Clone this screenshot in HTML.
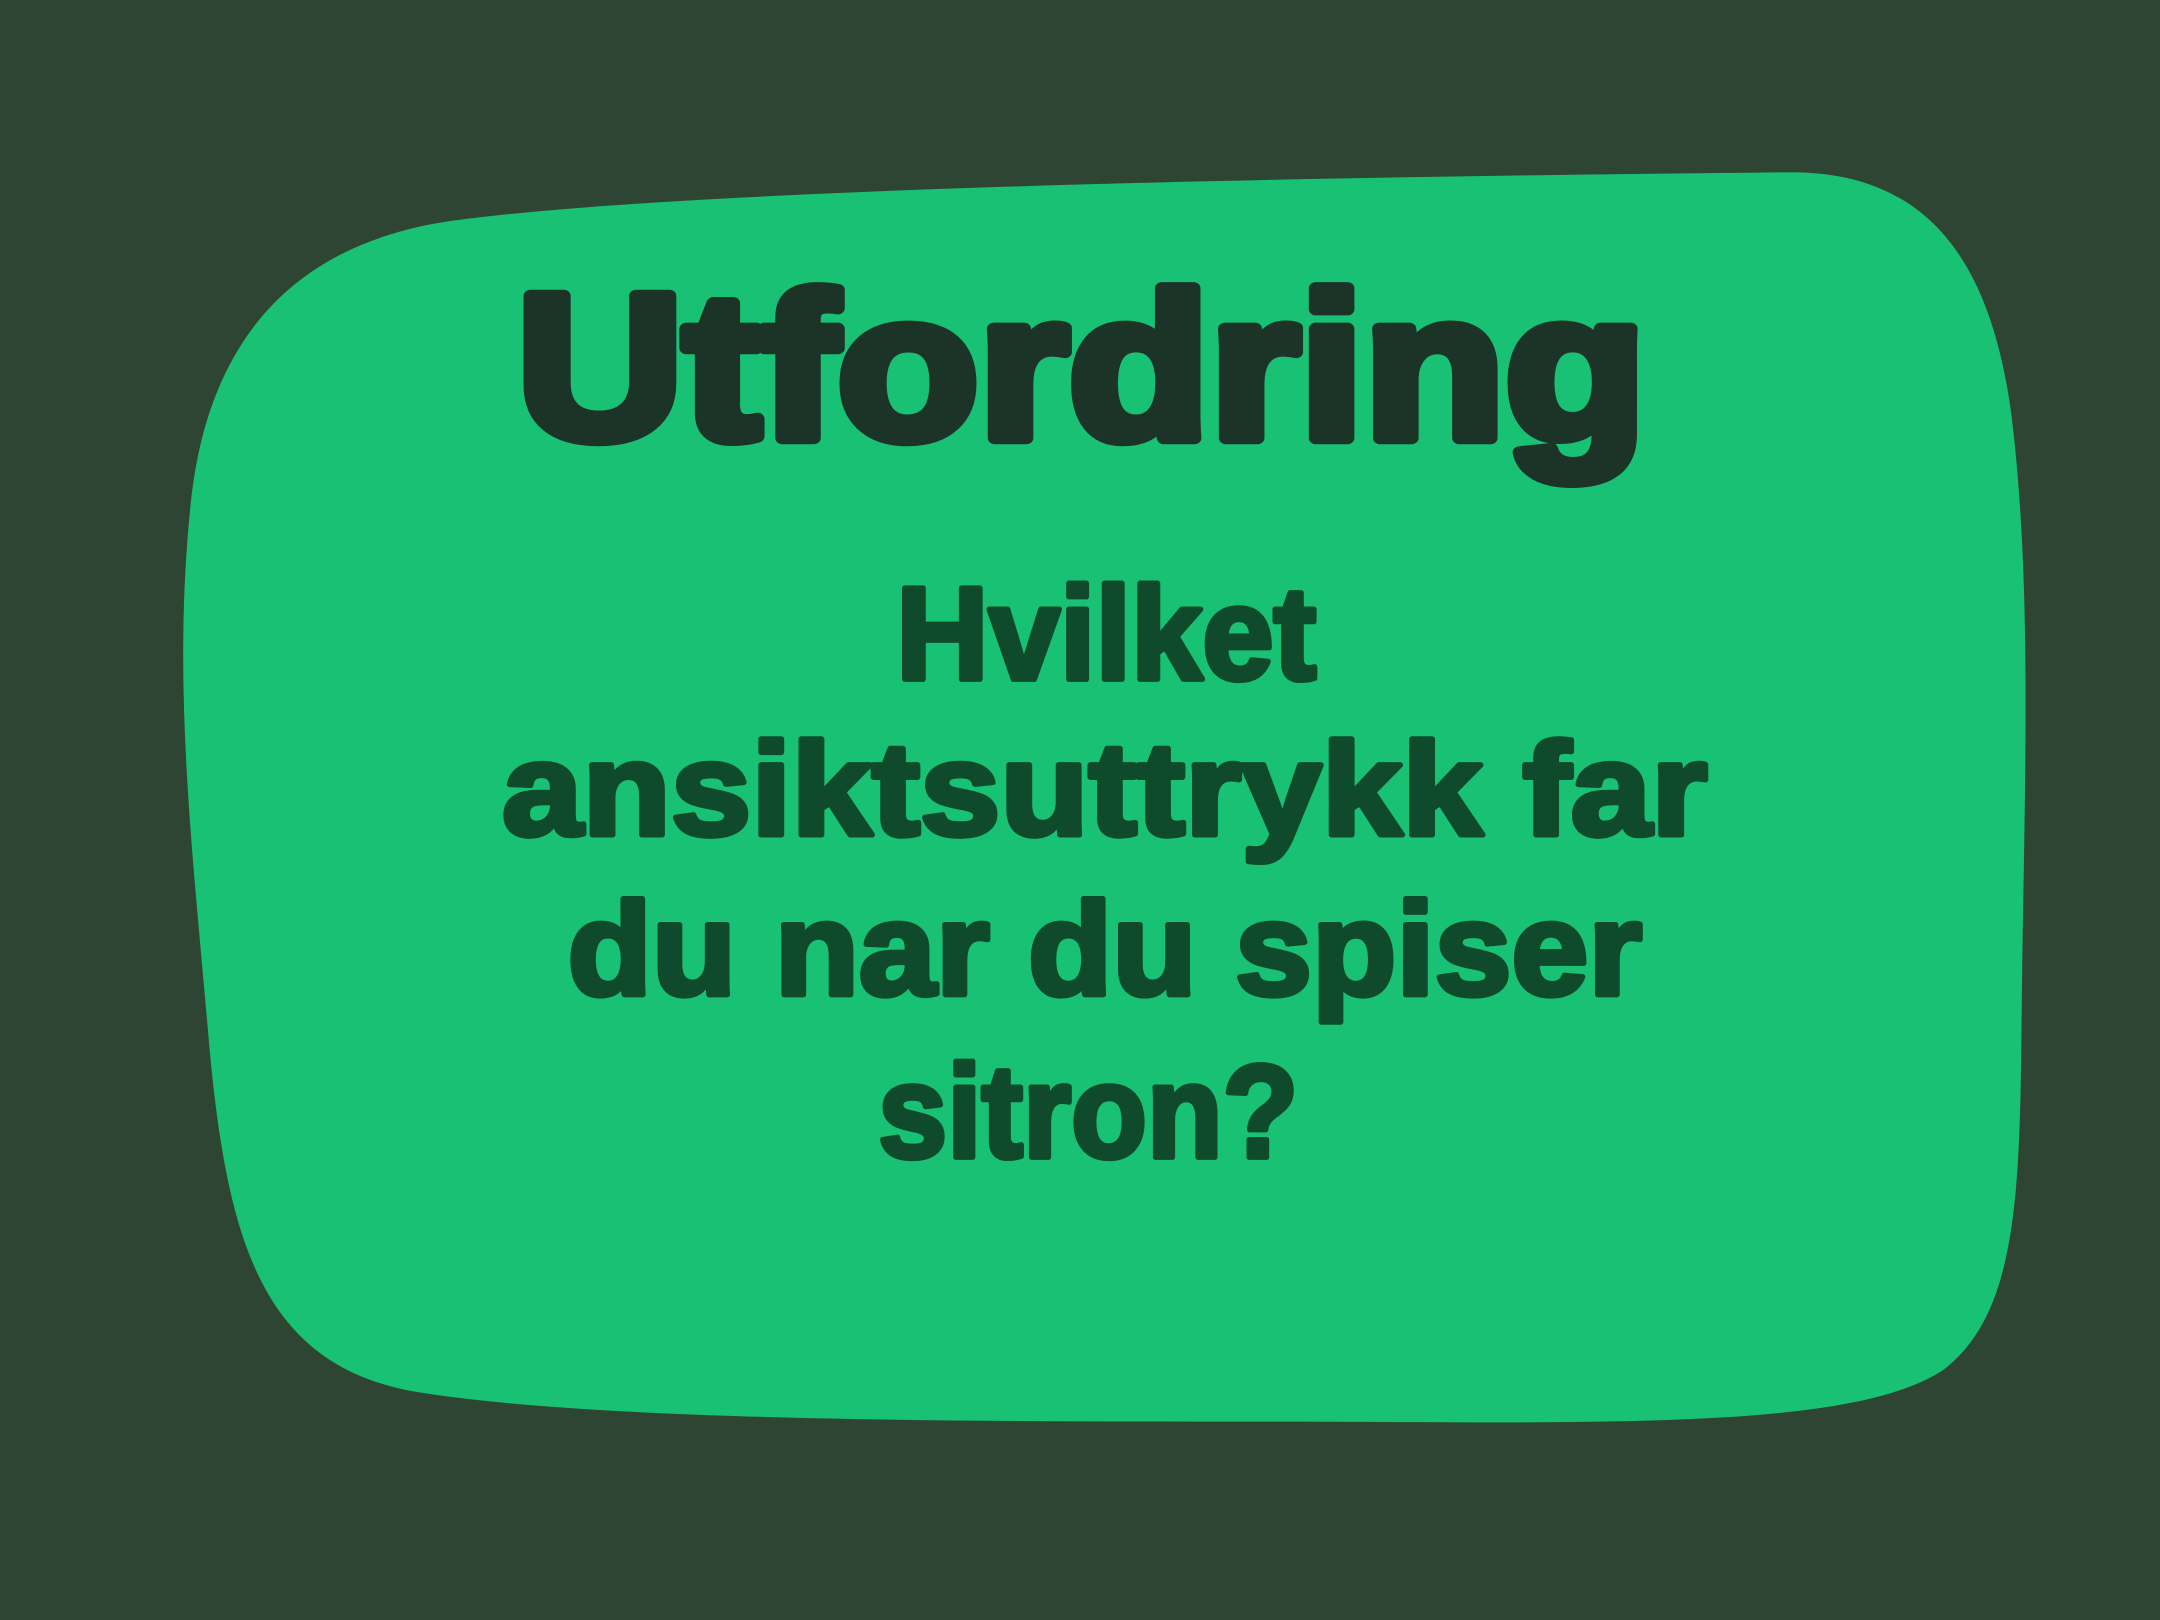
<!DOCTYPE html>
<html><head><meta charset="utf-8"><style>
html,body{margin:0;padding:0;background:#2f4534;}
svg{display:block}
</style></head><body>
<svg width="2160" height="1620" viewBox="0 0 1568 1176" xmlns="http://www.w3.org/2000/svg">
<rect width="1568" height="1176" fill="#2f4534"/>
<path d="M330,160 C520,135 1000,128 1300,125 C1400,125 1445,190 1460,300 C1475,420 1470,560 1468,700 C1466,850 1470,950 1410,995 C1340,1040 1150,1032 900,1032 C650,1032 420,1030 300,1010 C190,990 165,900 152,760 C140,620 125,500 138,370 C150,240 220,175 330,160 Z" fill="#18c174"/>
<g font-family="'Liberation Sans',sans-serif" font-weight="bold" text-anchor="middle" stroke-linejoin="round" stroke-linecap="round">
<text x="785" y="318" font-size="150" fill="#1c3328" stroke="#1c3328" stroke-width="9" textLength="820" lengthAdjust="spacingAndGlyphs">Utfordring</text>
<g fill="#0e4a2b" stroke="#0e4a2b" stroke-width="4" font-size="96">
<text x="803" y="493" textLength="305" lengthAdjust="spacingAndGlyphs">Hvilket</text>
<text x="802" y="606" textLength="875" lengthAdjust="spacingAndGlyphs">ansiktsuttrykk far</text>
<text x="802" y="722" textLength="780" lengthAdjust="spacingAndGlyphs">du nar du spiser</text>
<text x="790" y="840" textLength="305" lengthAdjust="spacingAndGlyphs">sitron?</text>
</g></g>
</svg>
</body></html>
